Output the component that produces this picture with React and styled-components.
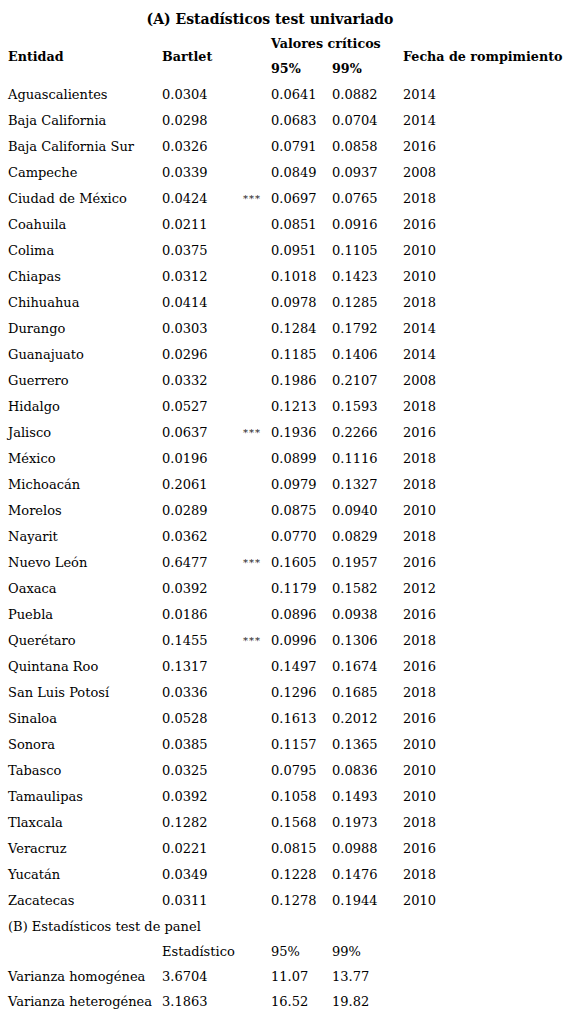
import React from 'react';
import styled, { createGlobalStyle } from 'styled-components';

const GlobalStyle = createGlobalStyle`
    body {
        margin: 0;
        padding: 6px 8px 0 8px;
        background: #fff;
        color: #000;
        font-family: "DejaVu Serif", "Liberation Serif", serif;
        font-size: 13px;
    }
`;

const states = [
    ['Aguascalientes', '0.0304', '', '0.0641', '0.0882', '2014'],
    ['Baja California', '0.0298', '', '0.0683', '0.0704', '2014'],
    ['Baja California Sur', '0.0326', '', '0.0791', '0.0858', '2016'],
    ['Campeche', '0.0339', '', '0.0849', '0.0937', '2008'],
    ['Ciudad de México', '0.0424', '***', '0.0697', '0.0765', '2018'],
    ['Coahuila', '0.0211', '', '0.0851', '0.0916', '2016'],
    ['Colima', '0.0375', '', '0.0951', '0.1105', '2010'],
    ['Chiapas', '0.0312', '', '0.1018', '0.1423', '2010'],
    ['Chihuahua', '0.0414', '', '0.0978', '0.1285', '2018'],
    ['Durango', '0.0303', '', '0.1284', '0.1792', '2014'],
    ['Guanajuato', '0.0296', '', '0.1185', '0.1406', '2014'],
    ['Guerrero', '0.0332', '', '0.1986', '0.2107', '2008'],
    ['Hidalgo', '0.0527', '', '0.1213', '0.1593', '2018'],
    ['Jalisco', '0.0637', '***', '0.1936', '0.2266', '2016'],
    ['México', '0.0196', '', '0.0899', '0.1116', '2018'],
    ['Michoacán', '0.2061', '', '0.0979', '0.1327', '2018'],
    ['Morelos', '0.0289', '', '0.0875', '0.0940', '2010'],
    ['Nayarit', '0.0362', '', '0.0770', '0.0829', '2018'],
    ['Nuevo León', '0.6477', '***', '0.1605', '0.1957', '2016'],
    ['Oaxaca', '0.0392', '', '0.1179', '0.1582', '2012'],
    ['Puebla', '0.0186', '', '0.0896', '0.0938', '2016'],
    ['Querétaro', '0.1455', '***', '0.0996', '0.1306', '2018'],
    ['Quintana Roo', '0.1317', '', '0.1497', '0.1674', '2016'],
    ['San Luis Potosí', '0.0336', '', '0.1296', '0.1685', '2018'],
    ['Sinaloa', '0.0528', '', '0.1613', '0.2012', '2016'],
    ['Sonora', '0.0385', '', '0.1157', '0.1365', '2010'],
    ['Tabasco', '0.0325', '', '0.0795', '0.0836', '2010'],
    ['Tamaulipas', '0.0392', '', '0.1058', '0.1493', '2010'],
    ['Tlaxcala', '0.1282', '', '0.1568', '0.1973', '2018'],
    ['Veracruz', '0.0221', '', '0.0815', '0.0988', '2016'],
    ['Yucatán', '0.0349', '', '0.1228', '0.1476', '2018'],
    ['Zacatecas', '0.0311', '', '0.1278', '0.1944', '2010'],
];

const panel = [
    ['Varianza homogénea', '3.6704', '11.07', '13.77'],
    ['Varianza heterogénea', '3.1863', '16.52', '19.82'],
];

export default function App() {
    return (
        <>
            <GlobalStyle />
            <Table>
                <colgroup>
                    <col style={{ width: 154 }} />
                    <col style={{ width: 81 }} />
                    <col style={{ width: 28 }} />
                    <col style={{ width: 61 }} />
                    <col style={{ width: 71 }} />
                    <col />
                </colgroup>
                <thead>
                    <Row h={25}>
                        <Title colSpan={6}>(A) Estadísticos test univariado</Title>
                    </Row>
                    <Row h={25}>
                        <Head rowSpan={2}>Entidad</Head>
                        <Head rowSpan={2}>Bartlet</Head>
                        <Head />
                        <Head colSpan={2}>Valores críticos</Head>
                        <Head rowSpan={2}>Fecha de rompimiento</Head>
                    </Row>
                    <Row h={25}>
                        <Head />
                        <Head>95%</Head>
                        <Head>99%</Head>
                    </Row>
                </thead>
                <tbody>
                    {states.map(([name, bartlet, sig, p95, p99, year]) => (
                        <Row key={name} h={26}>
                            <Cell>{name}</Cell>
                            <Cell>{bartlet}</Cell>
                            <Stars>{sig}</Stars>
                            <Cell>{p95}</Cell>
                            <Cell>{p99}</Cell>
                            <Cell>{year}</Cell>
                        </Row>
                    ))}
                    <Row h={26}>
                        <Cell colSpan={6}>(B) Estadísticos test de panel</Cell>
                    </Row>
                    <Row h={25}>
                        <Cell />
                        <Cell colSpan={2}>Estadístico</Cell>
                        <Cell>95%</Cell>
                        <Cell>99%</Cell>
                        <Cell />
                    </Row>
                    {panel.map(([name, stat, p95, p99]) => (
                        <Row key={name} h={25}>
                            <Cell>{name}</Cell>
                            <Cell colSpan={2}>{stat}</Cell>
                            <Cell>{p95}</Cell>
                            <Cell>{p99}</Cell>
                            <Cell />
                        </Row>
                    ))}
                </tbody>
            </Table>
        </>
    );
}

const Table = styled.table`
    width: 554px;
    table-layout: fixed;
    border-collapse: collapse;
    border-spacing: 0;
`;

const Row = styled.tr`
    height: ${props => props.h}px;
`;

const Title = styled.th`
    padding: 0;
    text-align: center;
    font-size: 14px;
    font-weight: bold;
    white-space: nowrap;
    text-indent: -30px;
`;

const Head = styled.th`
    padding: 0;
    text-align: left;
    font-size: 12.7px;
    font-weight: bold;
    white-space: nowrap;
    vertical-align: middle;
`;

const Cell = styled.td`
    padding: 0;
    text-align: left;
    white-space: nowrap;
    vertical-align: middle;
`;

const Stars = styled(Cell)`
    font-size: 10px;
    letter-spacing: 1px;
    color: #222;
`;
